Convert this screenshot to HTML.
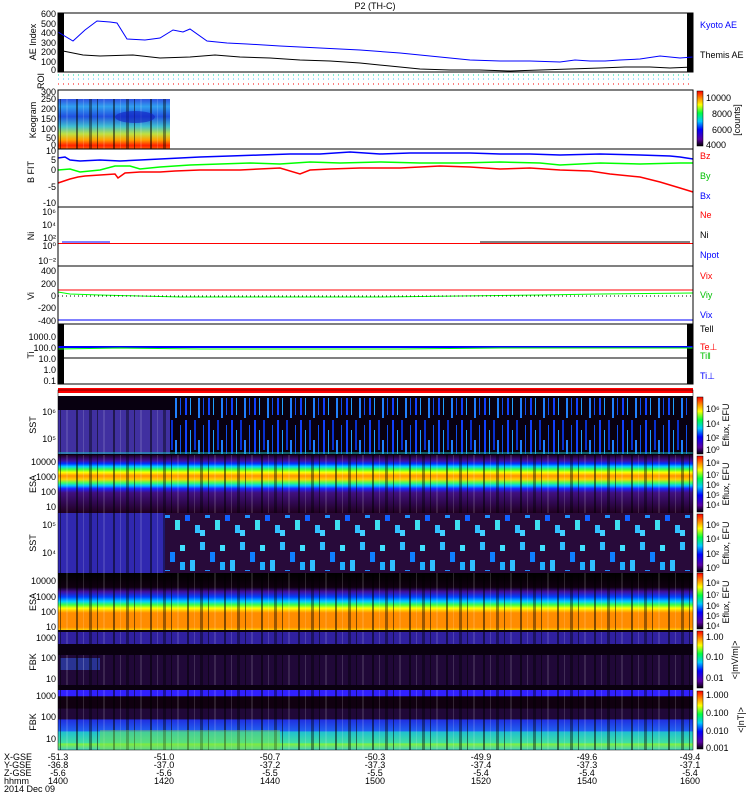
<!DOCTYPE html>
<html><head><meta charset="utf-8"><style>
body{margin:0;background:#fff;width:750px;height:800px;overflow:hidden}
svg{display:block}
text{font-family:"Liberation Sans",sans-serif;font-size:9px}
</style></head><body>
<svg width="750" height="800" viewBox="0 0 750 800" xmlns="http://www.w3.org/2000/svg">
<defs>
<linearGradient id="cb" x1="0" y1="1" x2="0" y2="0">
<stop offset="0" stop-color="#000"/><stop offset=".12" stop-color="#5a00a0"/><stop offset=".3" stop-color="#0000ff"/><stop offset=".45" stop-color="#00c8ff"/><stop offset=".6" stop-color="#00ff40"/><stop offset=".75" stop-color="#ffff00"/><stop offset=".88" stop-color="#ff8000"/><stop offset="1" stop-color="#ff0000"/></linearGradient>
<linearGradient id="keo" x1="0" y1="0" x2="0" y2="1">
<stop offset="0" stop-color="#3050e0"/><stop offset=".15" stop-color="#30a0f0"/><stop offset=".35" stop-color="#2050e0"/><stop offset=".55" stop-color="#40c0d0"/><stop offset=".7" stop-color="#c0e040"/><stop offset=".82" stop-color="#ffa000"/><stop offset=".93" stop-color="#ff2000"/><stop offset="1" stop-color="#ff6000"/></linearGradient>
<linearGradient id="esae" x1="0" y1="0" x2="0" y2="1">
<stop offset="0" stop-color="#200020"/><stop offset=".1" stop-color="#4010a0"/><stop offset=".15" stop-color="#0030ff"/><stop offset=".2" stop-color="#00d0ff"/><stop offset=".25" stop-color="#40ff40"/><stop offset=".3" stop-color="#ffff00"/><stop offset=".36" stop-color="#ff9000"/><stop offset=".42" stop-color="#ffd000"/><stop offset=".48" stop-color="#40ff60"/><stop offset=".53" stop-color="#00c0ff"/><stop offset=".58" stop-color="#2020ff"/><stop offset=".65" stop-color="#401080"/><stop offset="1" stop-color="#200020"/></linearGradient>
<linearGradient id="esai" x1="0" y1="0" x2="0" y2="1">
<stop offset="0" stop-color="#000"/><stop offset=".25" stop-color="#100010"/><stop offset=".33" stop-color="#4010a0"/><stop offset=".42" stop-color="#0040ff"/><stop offset=".5" stop-color="#00d0ff"/><stop offset=".56" stop-color="#40ff40"/><stop offset=".62" stop-color="#ffff00"/><stop offset=".7" stop-color="#ff8c00"/><stop offset=".95" stop-color="#ff8c00"/><stop offset="1" stop-color="#ffd000"/></linearGradient>
<linearGradient id="fbk2" x1="0" y1="0" x2="0" y2="1">
<stop offset="0" stop-color="#3020ff"/><stop offset=".1" stop-color="#3020ff"/><stop offset=".11" stop-color="#100010"/><stop offset=".3" stop-color="#100010"/><stop offset=".32" stop-color="#200838"/><stop offset=".48" stop-color="#200838"/><stop offset=".5" stop-color="#2030e0"/><stop offset=".68" stop-color="#2060f0"/><stop offset=".7" stop-color="#20c0d0"/><stop offset=".88" stop-color="#40e0a0"/><stop offset=".9" stop-color="#80f040"/><stop offset="1" stop-color="#40d0c0"/></linearGradient>
<pattern id="stripes" width="37" height="10" patternUnits="userSpaceOnUse">
<rect x="2" width="2" height="10" fill="#000" opacity=".5"/><rect x="9" width="1" height="10" fill="#fff" opacity=".15"/><rect x="15" width="3" height="10" fill="#000" opacity=".4"/><rect x="23" width="1" height="10" fill="#000" opacity=".5"/><rect x="29" width="2" height="10" fill="#fff" opacity=".12"/></pattern>
<pattern id="sste" width="23" height="60" patternUnits="userSpaceOnUse">
<rect x="1" y="0" width="2" height="55" fill="#1040ff"/><rect x="6" y="10" width="1" height="45" fill="#20a0ff"/><rect x="10" y="0" width="2" height="30" fill="#0830d0"/><rect x="14" y="20" width="2" height="38" fill="#2080ff"/><rect x="19" y="5" width="1" height="50" fill="#1050f0"/></pattern>
<pattern id="ssti" width="40" height="60" patternUnits="userSpaceOnUse">
<rect x="0" y="2" width="5" height="8" fill="#30c0ff"/><rect x="10" y="12" width="5" height="10" fill="#1080ff"/><rect x="20" y="5" width="5" height="6" fill="#40e0ff"/><rect x="30" y="20" width="5" height="12" fill="#30c0ff"/><rect x="5" y="30" width="5" height="8" fill="#2090ff"/><rect x="15" y="40" width="5" height="10" fill="#40e0f0"/><rect x="25" y="35" width="5" height="6" fill="#1060ff"/><rect x="35" y="45" width="5" height="8" fill="#30c0ff"/><rect x="0" y="50" width="5" height="6" fill="#40d0ff"/><rect x="20" y="22" width="5" height="8" fill="#20b0ff"/></pattern>
</defs>

<text x="375" y="9" text-anchor="middle" font-size="10">P2 (TH-C)</text>

<!-- AE -->
<rect x="58" y="13" width="6" height="59" fill="#000"/>
<rect x="687" y="13" width="6" height="59" fill="#000"/>
<polyline fill="none" stroke="#0000ff" points="58,32 73,41 85,30 97,21 110,22 117,23 127,39 145,40 160,38 173,30 183,32 190,29 207,41 227,43 247,44 280,46 320,48 360,50 400,53 440,57 470,60 500,61 530,61 560,62 575,60 590,61 605,61 620,60 640,59 660,56 680,58 693,57"/>
<polyline fill="none" stroke="#000" points="58,50 83,55 100,56 133,55 160,58 190,57 215,55 240,57 270,58 300,60 330,61 360,63 390,66 420,69 450,70 480,70 510,71 540,70 570,69 600,68 625,67 650,67 670,68 693,67"/>
<rect x="58" y="13" width="635" height="59" fill="none" stroke="#000"/>
<g text-anchor="middle">
<text transform="translate(36,42) rotate(-90)">AE Index</text>
<text transform="translate(44,81) rotate(-90)">ROI</text>
<text transform="translate(36,120) rotate(-90)">Keogram</text>
<text transform="translate(34,172) rotate(-90)">B FIT</text>
<text transform="translate(34,236) rotate(-90)">Ni</text>
<text transform="translate(34,296) rotate(-90)">Vi</text>
<text transform="translate(34,355) rotate(-90)">Ti</text>
<text transform="translate(36,425) rotate(-90)">SST</text>
<text transform="translate(36,484) rotate(-90)">ESA</text>
<text transform="translate(36,543) rotate(-90)">SST</text>
<text transform="translate(36,602) rotate(-90)">ESA</text>
<text transform="translate(36,662) rotate(-90)">FBK</text>
<text transform="translate(36,722) rotate(-90)">FBK</text>
</g>
<g text-anchor="end"><text x="56" y="17">600</text><text x="56" y="27">500</text><text x="56" y="36">400</text><text x="56" y="46">300</text><text x="56" y="55">200</text><text x="56" y="65">100</text><text x="56" y="73">0</text></g>
<text x="700" y="28" fill="#0000ff">Kyoto AE</text>
<text x="700" y="58">Themis AE</text>

<!-- ROI -->
<line x1="58" y1="75" x2="693" y2="75" stroke="#00e0a0" stroke-dasharray="1 4"/>
<line x1="58" y1="79" x2="693" y2="79" stroke="#40c0ff" stroke-dasharray="1 4"/>
<line x1="58" y1="84" x2="693" y2="84" stroke="#ff0000" stroke-dasharray="1 4"/>

<!-- Keogram -->
<rect x="58" y="99" width="112" height="50" fill="url(#keo)"/>
<rect x="58" y="99" width="112" height="50" fill="url(#stripes)"/>
<ellipse cx="135" cy="117" rx="20" ry="6" fill="#1020c0" opacity=".6"/>
<rect x="58" y="90" width="635" height="59" fill="none" stroke="#000"/>
<g text-anchor="end"><text x="56" y="95">300</text><text x="56" y="102">250</text><text x="56" y="112">200</text><text x="56" y="122">150</text><text x="56" y="132">100</text><text x="56" y="141">50</text><text x="56" y="148">0</text></g>
<rect x="697" y="91" width="6" height="55" fill="url(#cb)" stroke="#000" stroke-width=".5"/>
<g><text x="706" y="101">10000</text><text x="712" y="117">8000</text><text x="712" y="133">6000</text><text x="706" y="148">4000</text></g>
<text transform="translate(740,120) rotate(-90)" text-anchor="middle">[counts]</text>

<!-- B FIT -->
<polyline fill="none" stroke="#0000ff" stroke-width="1.5" points="58,158 65,157 70,160 80,161 100,160 120,161 140,160 160,159 180,158 200,157 230,156 260,155 290,154 320,154 350,152 380,154 410,153 440,153 470,153 500,154 530,154 560,155 600,154 640,155 670,156 680,157 693,159"/>
<polyline fill="none" stroke="#00ff00" stroke-width="1.5" points="58,170 70,169 80,172 100,170 115,166 130,166 140,169 160,167 190,165 220,164 250,163 280,164 310,162 340,163 380,162 420,163 460,163 500,162 540,163 560,165 600,163 640,164 680,163 693,163"/>
<polyline fill="none" stroke="#ff0000" stroke-width="1.5" points="58,183 70,179 78,177 85,176 100,175 115,174 118,178 125,173 140,172 160,172 175,171 200,170 240,170 280,168 300,174 310,170 330,169 360,168 400,168 440,166 470,167 500,169 530,168 560,170 590,171 610,174 640,177 660,182 680,188 693,192"/>
<rect x="58" y="149" width="635" height="58" fill="none" stroke="#000"/>
<g text-anchor="end"><text x="56" y="154">10</text><text x="56" y="163">5</text><text x="56" y="173">0</text><text x="56" y="190">-5</text><text x="56" y="206">-10</text></g>
<g><text x="700" y="159" fill="#ff0000">Bz</text><text x="700" y="179" fill="#00c000">By</text><text x="700" y="199" fill="#0000ff">Bx</text></g>

<!-- Ni -->
<line x1="62" y1="242" x2="110" y2="242" stroke="#0000ff"/>
<line x1="480" y1="242" x2="690" y2="242" stroke="#000"/>
<line x1="58" y1="243.5" x2="693" y2="243.5" stroke="#ff0000"/>
<rect x="58" y="207" width="635" height="59" fill="none" stroke="#000"/>
<g text-anchor="end"><text x="56" y="215">10⁶</text><text x="56" y="228">10⁴</text><text x="56" y="241">10²</text><text x="56" y="249">10⁰</text><text x="56" y="264">10⁻²</text></g>
<g><text x="700" y="218" fill="#ff0000">Ne</text><text x="700" y="238">Ni</text><text x="700" y="258" fill="#0000ff">Npot</text></g>

<!-- Vi -->
<line x1="58" y1="290" x2="693" y2="290" stroke="#ff0000"/>
<polyline fill="none" stroke="#00ff00" points="58,292 70,294 100,295 140,296 180,297 220,297 300,297 380,297 460,296 540,295 600,294 693,293"/>
<line x1="58" y1="296" x2="693" y2="296" stroke="#000" stroke-dasharray="1 3"/>
<line x1="58" y1="320" x2="693" y2="320" stroke="#0000ff"/>
<rect x="58" y="266" width="635" height="58" fill="none" stroke="#000"/>
<g text-anchor="end"><text x="56" y="274">400</text><text x="56" y="287">200</text><text x="56" y="299">0</text><text x="56" y="311">-200</text><text x="56" y="324">-400</text></g>
<g><text x="700" y="279" fill="#ff0000">Vix</text><text x="700" y="298" fill="#00c000">Viy</text><text x="700" y="318" fill="#0000ff">Vix</text><text x="700" y="332">Tell</text></g>

<!-- Ti -->
<rect x="58" y="324" width="6" height="60" fill="#000"/>
<rect x="687" y="324" width="6" height="60" fill="#000"/>
<line x1="58" y1="347" x2="693" y2="347" stroke="#0000ff" stroke-width="2"/>
<polyline fill="none" stroke="#00ff00" points="58,349 120,348 200,349 300,349 400,349 500,348 600,348 693,348"/>
<line x1="58" y1="358" x2="693" y2="358" stroke="#000"/>
<rect x="58" y="324" width="635" height="60" fill="none" stroke="#000"/>
<g text-anchor="end"><text x="56" y="340">1000.0</text><text x="56" y="351">100.0</text><text x="56" y="362">10.0</text><text x="56" y="373">1.0</text><text x="56" y="384">0.1</text></g>
<g><text x="700" y="350" fill="#ff0000">Te⊥</text><text x="700" y="359" fill="#00c000">Ti‖</text><text x="700" y="379" fill="#0000ff">Ti⊥</text></g>

<rect x="58" y="388" width="635" height="5" fill="#ff0000"/>

<!-- SST e -->
<rect x="58" y="396" width="635" height="59" fill="#080010"/>
<rect x="170" y="398" width="520" height="56" fill="url(#sste)"/>
<rect x="58" y="410" width="112" height="44" fill="#4030a0"/>
<rect x="58" y="410" width="112" height="44" fill="url(#stripes)"/>
<line x1="58" y1="453" x2="693" y2="453" stroke="#20c0c0"/>
<g text-anchor="end"><text x="56" y="415">10⁶</text><text x="56" y="442">10⁵</text></g>

<!-- ESA e -->
<rect x="58" y="455" width="635" height="58" fill="url(#esae)"/>
<rect x="58" y="455" width="635" height="58" fill="url(#stripes)"/>
<g text-anchor="end"><text x="56" y="465">10000</text><text x="56" y="480">1000</text><text x="56" y="495">100</text><text x="56" y="510">10</text></g>

<!-- SST i -->
<rect x="58" y="513" width="635" height="60" fill="#280a3a"/>
<rect x="165" y="515" width="525" height="56" fill="url(#ssti)"/>
<rect x="58" y="513" width="107" height="60" fill="#3028b0"/>
<rect x="58" y="513" width="107" height="60" fill="url(#stripes)"/>
<g text-anchor="end"><text x="56" y="528">10⁵</text><text x="56" y="556">10⁴</text></g>

<!-- ESA i -->
<rect x="58" y="573" width="635" height="57" fill="url(#esai)"/>
<rect x="58" y="573" width="635" height="57" fill="url(#stripes)"/>
<g text-anchor="end"><text x="56" y="584">10000</text><text x="56" y="600">1000</text><text x="56" y="615">100</text><text x="56" y="630">10</text></g>

<!-- FBK1 -->
<rect x="58" y="630" width="635" height="60" fill="#0a0010"/>
<rect x="58" y="632" width="635" height="12" fill="#3020a0"/>
<rect x="58" y="632" width="635" height="12" fill="url(#stripes)"/>
<rect x="58" y="655" width="635" height="30" fill="#200838"/>
<rect x="58" y="655" width="635" height="30" fill="url(#stripes)"/>
<rect x="60" y="658" width="40" height="12" fill="#3050d0" opacity=".6"/>
<rect x="58" y="658" width="40" height="12" fill="url(#stripes)"/>
<g text-anchor="end"><text x="56" y="641">1000</text><text x="56" y="661">100</text><text x="56" y="682">10</text></g>

<!-- FBK2 -->
<rect x="58" y="690" width="635" height="60" fill="url(#fbk2)"/>
<rect x="58" y="690" width="635" height="60" fill="url(#stripes)"/>
<rect x="100" y="730" width="180" height="20" fill="#80e040" opacity=".4"/>
<rect x="58" y="390" width="635" height="360" fill="none" stroke="#000" stroke-width=".5"/>
<g text-anchor="end"><text x="56" y="699">1000</text><text x="56" y="720">100</text><text x="56" y="742">10</text></g>

<!-- colorbars -->
<g>
<rect x="697" y="397" width="6" height="57" fill="url(#cb)" stroke="#000" stroke-width=".5"/>
<rect x="697" y="456" width="6" height="56" fill="url(#cb)" stroke="#000" stroke-width=".5"/>
<rect x="697" y="514" width="6" height="58" fill="url(#cb)" stroke="#000" stroke-width=".5"/>
<rect x="697" y="573" width="6" height="56" fill="url(#cb)" stroke="#000" stroke-width=".5"/>
<rect x="697" y="631" width="6" height="57" fill="url(#cb)" stroke="#000" stroke-width=".5"/>
<rect x="697" y="691" width="6" height="58" fill="url(#cb)" stroke="#000" stroke-width=".5"/>
</g>
<g font-size="8">
<text x="706" y="412">10⁶</text><text x="706" y="427">10⁴</text><text x="706" y="441">10²</text><text x="706" y="453">10⁰</text>
<text x="706" y="466">10⁸</text><text x="706" y="478">10⁷</text><text x="706" y="488">10⁶</text><text x="706" y="498">10⁵</text><text x="706" y="508">10⁴</text>
<text x="706" y="528">10⁶</text><text x="706" y="542">10⁴</text><text x="706" y="557">10²</text><text x="706" y="571">10⁰</text>
<text x="706" y="586">10⁸</text><text x="706" y="598">10⁷</text><text x="706" y="609">10⁶</text><text x="706" y="619">10⁵</text><text x="706" y="629">10⁴</text>
<text x="706" y="640">1.00</text><text x="706" y="660">0.10</text><text x="706" y="681">0.01</text>
<text x="706" y="698">1.000</text><text x="706" y="716">0.100</text><text x="706" y="734">0.010</text><text x="706" y="751">0.001</text>
</g>
<g text-anchor="middle" font-size="8">
<text transform="translate(729,425) rotate(-90)">Eflux, EFU</text>
<text transform="translate(729,484) rotate(-90)">Eflux, EFU</text>
<text transform="translate(729,543) rotate(-90)">Eflux, EFU</text>
<text transform="translate(729,602) rotate(-90)">Eflux, EFU</text>
<text transform="translate(738,660) rotate(-90)">&lt;|mV/m|&gt;</text>
<text transform="translate(744,720) rotate(-90)">&lt;|nT|&gt;</text>
</g>

<!-- bottom labels -->
<g font-size="8.5">
<text x="4" y="760">X-GSE</text><text x="4" y="768">Y-GSE</text><text x="4" y="776">Z-GSE</text><text x="4" y="784">hhmm</text><text x="4" y="792">2014 Dec 09</text>
</g>
<g font-size="8.5" text-anchor="middle">
<text x="58" y="760">-51.3</text><text x="58" y="768">-36.8</text><text x="58" y="776">-5.6</text><text x="58" y="784">1400</text>
<text x="164" y="760">-51.0</text><text x="164" y="768">-37.0</text><text x="164" y="776">-5.6</text><text x="164" y="784">1420</text>
<text x="270" y="760">-50.7</text><text x="270" y="768">-37.2</text><text x="270" y="776">-5.5</text><text x="270" y="784">1440</text>
<text x="375" y="760">-50.3</text><text x="375" y="768">-37.3</text><text x="375" y="776">-5.5</text><text x="375" y="784">1500</text>
<text x="481" y="760">-49.9</text><text x="481" y="768">-37.4</text><text x="481" y="776">-5.4</text><text x="481" y="784">1520</text>
<text x="587" y="760">-49.6</text><text x="587" y="768">-37.3</text><text x="587" y="776">-5.4</text><text x="587" y="784">1540</text>
<text x="690" y="760">-49.4</text><text x="690" y="768">-37.1</text><text x="690" y="776">-5.4</text><text x="690" y="784">1600</text>
</g>
</svg>
</body></html>
